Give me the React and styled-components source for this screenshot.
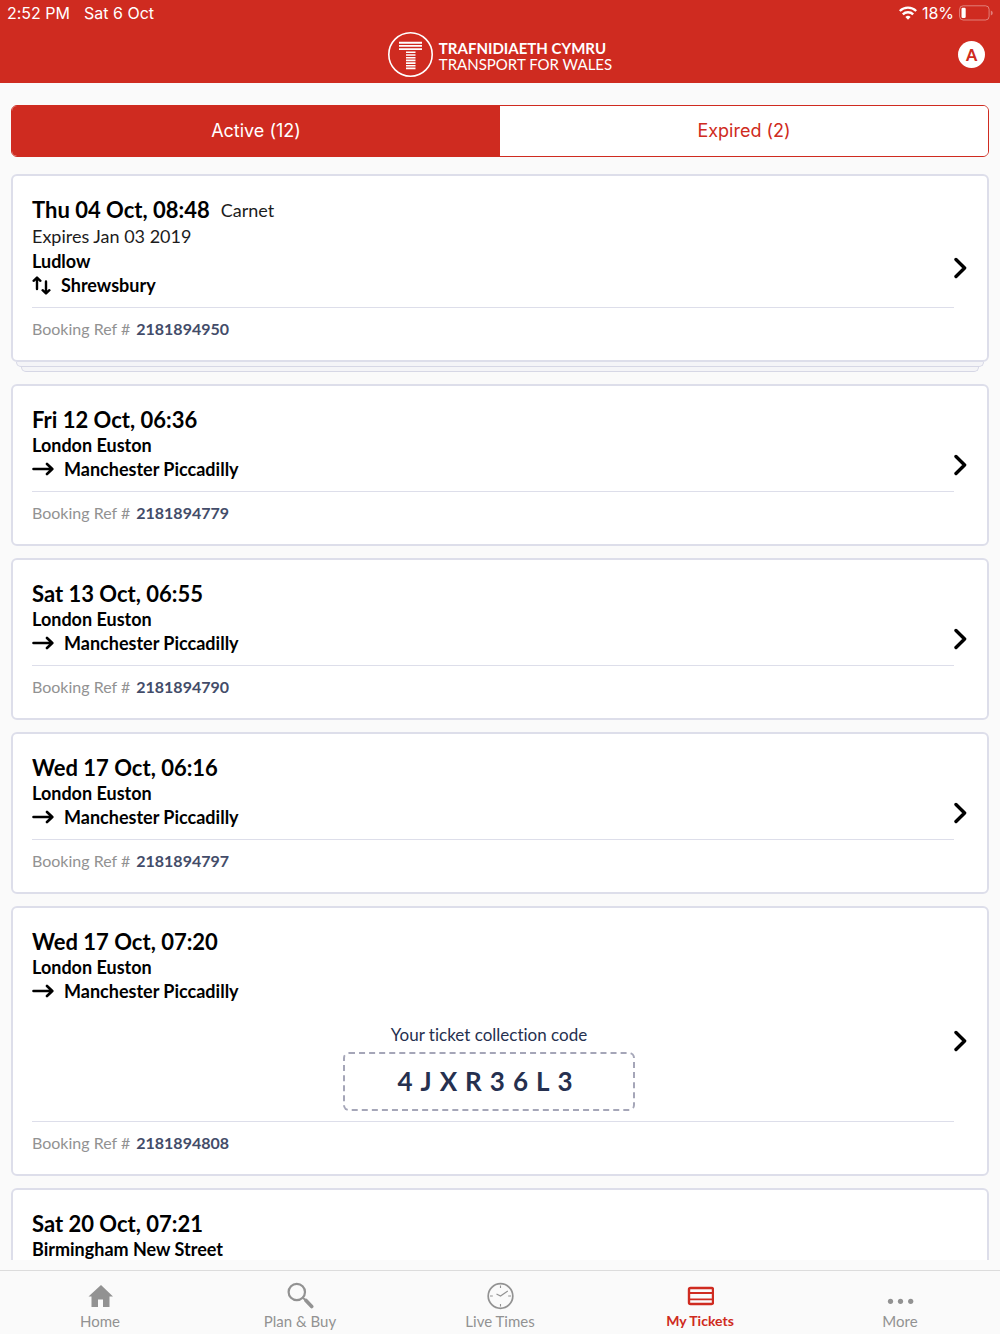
import React, { useState } from "react";
import styled, { createGlobalStyle, css } from "styled-components";

const red = "#cf2b20";
const paper = "#fafafa";
const line = "#dddeea";
const grey = "#929292";
const navy = "#26304f";

const GlobalStyle = createGlobalStyle`
  *, *::before, *::after { box-sizing: border-box; }
  body {
    margin: 0;
    background: ${paper};
    color: #000;
    font-family: Lato, "Open Sans", sans-serif;
    font-variant-ligatures: none;
  }
  button { font: inherit; margin: 0; padding: 0; cursor: pointer; }
  a { color: inherit; text-decoration: none; }
`;

const Shell = styled.div`
  display: flex;
  flex-direction: column;
  height: 100vh;
`;

const Header = styled.header`
  flex: none;
  background: ${red};
  color: #fff;
`;

const StatusBar = styled.div`
  display: flex;
  align-items: center;
  justify-content: space-between;
  height: 26px;
  padding: 0 7px;
  font-family: Inter, sans-serif;
  font-size: 16px;
  line-height: 20px;
`;

const StatusGroup = styled.div`
  display: flex;
  align-items: center;
  gap: ${(p) => p.$gap}px;
`;

const BrandRow = styled.div`
  display: grid;
  grid-template-columns: 1fr auto 1fr;
  align-items: center;
  height: 57px;
  padding: 0 15px;
`;

const Brand = styled.div`
  grid-column: 2;
  display: flex;
  align-items: center;
  gap: 6px;
`;

const BrandName = styled.div`
  display: flex;
  flex-direction: column;
  padding-top: 2px;
  font-size: 15px;
  line-height: 16px;
`;

const BrandLine = styled.span`
  font-weight: ${(p) => (p.$strong ? 700 : 400)};
`;

const Account = styled.button`
  justify-self: end;
  width: 27px;
  height: 27px;
  border: 0;
  border-radius: 50%;
  background: #fff;
  color: ${red};
  font-size: 16px;
  line-height: 27px;
  font-weight: 900;
  text-align: center;
`;

const Main = styled.main`
  flex: 1;
  min-height: 0;
  margin-bottom: 10px;
  padding: 22px 11px 0;
  overflow-y: auto;
  scrollbar-width: none;
`;

const Tabs = styled.div`
  display: flex;
  height: 52px;
  margin-bottom: 17px;
  border: 1px solid ${red};
  border-radius: 6px;
  overflow: hidden;
`;

const Tab = styled.button`
  flex: 1;
  border: 0;
  font-family: Inter, sans-serif;
  font-size: 18px;
  line-height: 24px;
  background: ${(p) => (p.$on ? red : "#fff")};
  color: ${(p) => (p.$on ? "#fff" : red)};
`;

const List = styled.ul`
  display: flex;
  flex-direction: column;
  gap: 12px;
  margin: 0;
  padding: 0;
  list-style: none;
`;

const Card = styled.a`
  display: flex;
  align-items: center;
  padding: 20px 20px 21px 19px;
  border: 2px solid ${line};
  border-radius: 6px;
  background: #fff;
`;

const StackEdge = styled.div`
  height: 5px;
  margin: 0 ${(p) => p.$inset}px;
  border: 1px solid #d6d7e5;
  border-top: 0;
  border-radius: 0 0 6px 6px;
  background: #f4f4f7;
`;

const Body = styled.div`
  flex: 1;
  min-width: 0;
`;

const Heading = styled.div`
  display: flex;
  align-items: center;
  gap: 11px;
  line-height: 27px;
`;

const When = styled.h2`
  margin: 0;
  font-size: 22px;
  font-weight: 700;
`;

const Note = styled.div`
  font-size: 18px;
  line-height: 26px;
  color: #1c1c1c;
`;

const Station = styled.div`
  display: flex;
  align-items: center;
  gap: 10px;
  font-size: 18px;
  line-height: 24px;
  font-weight: 700;
`;

const Booking = styled.div`
  display: flex;
  gap: 6px;
  margin-top: 10px;
  padding-top: 11px;
  border-top: 1px solid ${line};
  font-size: 16px;
  line-height: 20px;
  color: ${grey};
`;

const Ref = styled.span`
  color: #434c69;
  font-weight: 700;
`;

const Collection = styled.div`
  display: flex;
  flex-direction: column;
  align-items: center;
  gap: 5px;
  margin-top: 20px;
  padding-right: 8px;
  color: ${navy};
  font-size: 17px;
  line-height: 24px;
`;

const Code = styled.div`
  display: flex;
  align-items: center;
  justify-content: center;
  gap: 8px;
  width: 292px;
  height: 59px;
  padding: 0 8px 2px 0;
  border: 2px dashed #a5a6b8;
  border-radius: 6px;
  font-size: 26px;
  font-weight: 700;
`;

const Nav = styled.nav`
  flex: none;
  display: flex;
  height: 64px;
  border-top: 1px solid #dcdcdc;
  background: ${paper};
`;

const NavItem = styled.a`
  flex: 1;
  display: flex;
  flex-direction: column;
  align-items: center;
  padding-top: 11px;
  gap: 1px;
  font-size: ${(p) => (p.$on ? 14 : 15)}px;
  line-height: 20px;
  color: ${(p) => (p.$on ? red : grey)};
  ${(p) => p.$on && css`font-weight: 700;`}
`;

const Svg = styled.svg`
  display: block;
  flex: none;
  fill: none;
  stroke: currentColor;
`;

const Logo = () => (
  <Svg width="45" height="45" viewBox="0 0 45 45" aria-hidden="true">
    <circle cx="22.5" cy="22.5" r="21.7" strokeWidth="1.6" />
    <path d="M11 10.7h23M11 13.9h23M11 17.100h23" strokeWidth="1.900" />
    <path d="M18 20.300h9.500M18 23h9.500M18 25.700h9.500M18 28.400h9.500M18 31.100h9.500M18 33.800h9.500M18 36.400h9.500" strokeWidth="1.600" />
  </Svg>
);

const Wifi = () => (
  <Svg width="18" height="14" viewBox="0 0 18 14" strokeWidth="2.300" aria-hidden="true">
    <path d="M.8 5a11.600 11.600 0 0 1 16.400 0M3.800 8.400a7.400 7.400 0 0 1 10.400 0" />
    <path d="M9 13.800l-2.600-2.900a3.800 3.800 0 0 1 5.200 0z" fill="currentColor" stroke="none" />
  </Svg>
);

const Battery = () => (
  <Svg width="34" height="16" viewBox="0 0 34 16" aria-hidden="true">
    <rect x=".6" y=".8" width="29.500" height="14.200" rx="3.600" strokeOpacity=".4" />
    <rect x="2.500" y="2.800" width="4.200" height="10.200" rx="1.200" fill="currentColor" stroke="none" />
    <path d="M31.800 5.600q2 .6 2 2.400t-2 2.400z" fill="currentColor" fillOpacity=".4" stroke="none" />
  </Svg>
);

const Arrow = () => (
  <Svg width="22" height="14" viewBox="0 0 22 14" strokeWidth="2.600" strokeLinecap="round" strokeLinejoin="round" aria-hidden="true">
    <path d="M1.500 7h18.500M15 2l5.300 5-5.300 5" />
  </Svg>
);

const BothWays = () => (
  <Svg width="19" height="19" viewBox="0 0 19 19" strokeWidth="2.400" strokeLinecap="round" strokeLinejoin="round" aria-hidden="true">
    <path d="M5 13V2M1.600 4.800L5 1.600l3.400 3.200M14 5.500V17M10.600 14.200l3.400 3.200 3.400-3.200" />
  </Svg>
);

const Chevron = () => (
  <Svg width="13" height="22" viewBox="0 0 13 22" strokeWidth="3.400" strokeLinecap="round" strokeLinejoin="round" aria-hidden="true">
    <path d="M2 2.500L10.600 11 2 19.500" />
  </Svg>
);

const navIcons = {
  home: (
    <Svg width="28" height="28" viewBox="0 0 28 28" aria-hidden="true">
      <path d="M15 3L2.500 14.500h3V25H12v-7.500h5V25h6.500V14.500h3.500z" fill="currentColor" stroke="none" />
    </Svg>
  ),
  search: (
    <Svg width="28" height="28" viewBox="0 0 28 28" aria-hidden="true">
      <circle cx="10.800" cy="10" r="8.200" strokeWidth="2.200" />
      <path d="M17 16l2.500 2" strokeWidth="2" />
      <path d="M20 18.500l5.700 6" strokeWidth="3.600" strokeLinecap="round" />
    </Svg>
  ),
  clock: (
    <Svg width="28" height="28" viewBox="0 0 28 28" aria-hidden="true">
      <circle cx="14.500" cy="14" r="12.300" strokeWidth="1.700" />
      <path d="M14.500 3.500v2.500M14.500 22v2.500M4 14h2.800M22.200 14H25M10.500 12l4 2 7.300-5" strokeWidth="1.100" />
    </Svg>
  ),
  ticket: (
    <Svg width="28" height="28" viewBox="0 0 28 28" aria-hidden="true">
      <rect x="3" y="6" width="24" height="16" rx="1.500" strokeWidth="2.400" />
      <path d="M3 11h24M3 17.300h24" strokeWidth="1.800" />
    </Svg>
  ),
  dots: (
    <Svg width="28" height="28" viewBox="0 0 28 28" aria-hidden="true">
      <g fill="currentColor" stroke="none">
        <circle cx="4.500" cy="19.300" r="2.600" />
        <circle cx="14.500" cy="19.300" r="2.600" />
        <circle cx="24.700" cy="19.300" r="2.600" />
      </g>
    </Svg>
  ),
};

const tickets = [
  { when: "Thu 04 Oct, 08:48", kind: "Carnet", expires: "Expires Jan 03 2019", from: "Ludlow", to: "Shrewsbury", booking: "2181894950", stacked: true },
  { when: "Fri 12 Oct, 06:36", from: "London Euston", to: "Manchester Piccadilly", booking: "2181894779" },
  { when: "Sat 13 Oct, 06:55", from: "London Euston", to: "Manchester Piccadilly", booking: "2181894790" },
  { when: "Wed 17 Oct, 06:16", from: "London Euston", to: "Manchester Piccadilly", booking: "2181894797" },
  { when: "Wed 17 Oct, 07:20", from: "London Euston", to: "Manchester Piccadilly", booking: "2181894808", code: "4JXR36L3" },
  { when: "Sat 20 Oct, 07:21", from: "Birmingham New Street" },
];

const nav = [
  { icon: "home", label: "Home" },
  { icon: "search", label: "Plan & Buy" },
  { icon: "clock", label: "Live Times" },
  { icon: "ticket", label: "My Tickets" },
  { icon: "dots", label: "More" },
];

function Ticket({ when, kind, expires, from, to, booking, code, stacked }) {
  return (
    <li>
      <Card href="#ticket">
        <Body>
          <Heading>
            <When>{when}</When>
            {kind && <Note as="span">{kind}</Note>}
          </Heading>
          {expires && <Note>{expires}</Note>}
          <Station>{from}</Station>
          {to && (
            <Station>
              {stacked ? <BothWays /> : <Arrow />}
              {to}
            </Station>
          )}
          {code && (
            <Collection>
              Your ticket collection code
              <Code>
                {code.split("").map((c, i) => <span key={i}>{c}</span>)}
              </Code>
            </Collection>
          )}
          {booking && (
            <Booking>
              <span>Booking Ref #</span>
              <Ref>{booking}</Ref>
            </Booking>
          )}
        </Body>
        {booking && <Chevron />}
      </Card>
      {stacked && (
        <>
          <StackEdge $inset={5} />
          <StackEdge $inset={10} />
        </>
      )}
    </li>
  );
}

export default function App() {
  const [tab, setTab] = useState("active");
  return (
    <Shell>
      <GlobalStyle />
      <Header>
        <StatusBar>
          <StatusGroup $gap={14}>
            <span>2:52 PM</span>
            <span>Sat 6 Oct</span>
          </StatusGroup>
          <StatusGroup $gap={5}>
            <Wifi />
            <span>18%</span>
            <Battery />
          </StatusGroup>
        </StatusBar>
        <BrandRow>
          <Brand>
            <Logo />
            <BrandName>
              <BrandLine $strong>TRAFNIDIAETH CYMRU</BrandLine>
              <BrandLine>TRANSPORT FOR WALES</BrandLine>
            </BrandName>
          </Brand>
          <Account type="button" aria-label="Account">A</Account>
        </BrandRow>
      </Header>
      <Main>
        <Tabs role="tablist">
          <Tab type="button" role="tab" aria-selected={tab === "active"} $on={tab === "active"} onClick={() => setTab("active")}>
            Active (12)
          </Tab>
          <Tab type="button" role="tab" aria-selected={tab === "expired"} $on={tab === "expired"} onClick={() => setTab("expired")}>
            Expired (2)
          </Tab>
        </Tabs>
        <List>
          {tickets.map((t) => <Ticket key={t.when} {...t} />)}
        </List>
      </Main>
      <Nav>
        {nav.map(({ icon, label }) => (
          <NavItem key={icon} href={"#" + icon} $on={icon === "ticket"}>
            {navIcons[icon]}
            {label}
          </NavItem>
        ))}
      </Nav>
    </Shell>
  );
}
